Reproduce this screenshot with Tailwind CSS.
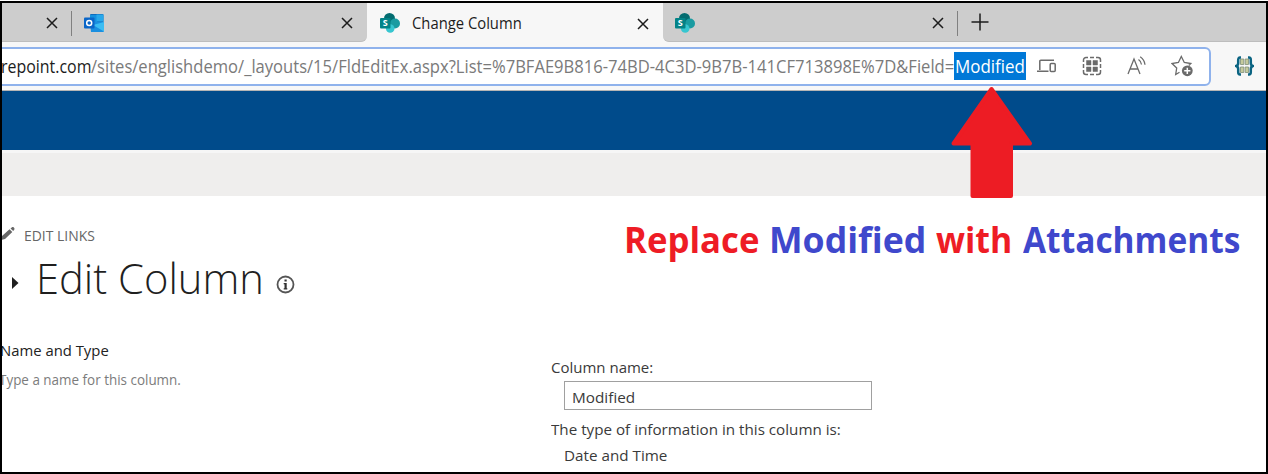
<!DOCTYPE html>
<html lang="en">
<head>
<meta charset="utf-8">
<title>Change Column</title>
<script src="https://cdn.jsdelivr.net/npm/@tailwindcss/browser@4"></script>
</head>
<body class="h-[474px] w-[1268px] overflow-hidden bg-white pt-px font-['Open_Sans','Noto_Sans',sans-serif]">
<svg class="hidden">
  <symbol id="sp" viewBox="0 0 20 20">
    <circle cx="9.5" cy="5.5" r="5.5" fill="#036c70"/>
    <circle cx="15" cy="10.5" r="5" fill="#1a9ba1"/>
    <circle cx="10.2" cy="15.5" r="4.3" fill="#37c6d0"/>
    <rect x="0" y="5" width="10.5" height="10.5" rx="1" fill="#038387"/>
    <text x="5.2" y="13.4" text-anchor="middle" font-size="9" font-weight="700" fill="#fff">S</text>
  </symbol>
  <symbol id="x" viewBox="0 0 12 12"><path d="M1 1l10 10M11 1L1 11" stroke="#1c1c1c" stroke-width="1.5" fill="none"/></symbol>
</svg>
<div class="relative flex h-[473px] w-[1268px] flex-col overflow-hidden border-2 border-black bg-white">
  <div class="flex h-10 shrink-0 bg-[#f7f7f7]">
    <div class="flex h-[39px] w-[365px] items-center rounded-br-md border-b border-[#bdbdbd] bg-[#cdcdcd] pt-0.5 pr-[14px]">
      <svg class="ml-[44px] size-3"><use href="#x"/></svg>
      <div class="ml-[13px] h-[25px] w-px bg-[#808080]"></div>
      <svg class="ml-3 h-[18px] w-5" viewBox="0 0 20 18">
        <rect x="6" y="0" width="13.5" height="14" rx="1" fill="#0f6cbd"/>
        <rect x="6" y="1" width="7" height="7" fill="#1490df"/>
        <rect x="12.500" y="0.500" width="7" height="7" fill="#28a8ea"/>
        <path d="M6 8h14v9a1 1 0 0 1-1 1H7z" fill="#1a8fe0"/>
        <path d="M20 8v9.500L9 11z" fill="#3bbdf3"/>
        <rect x="0" y="3.500" width="10.500" height="11" rx="1" fill="#0a66c8"/>
        <circle cx="5.200" cy="9" r="2.500" fill="none" stroke="#fff" stroke-width="1.500"/>
      </svg>
      <svg class="ml-auto size-3"><use href="#x"/></svg>
    </div>
    <div class="flex h-10 w-[296px] items-center rounded-t-md bg-[#f7f7f7] pr-[14px] pl-[13px]">
      <svg class="-mt-px size-5"><use href="#sp"/></svg>
      <span class="-mt-px ml-3 origin-left scale-x-[.955] text-[15.500px] leading-5 whitespace-nowrap text-[#1c1c1c]">Change Column</span>
      <svg class="mt-0.5 ml-auto size-3"><use href="#x"/></svg>
    </div>
    <div class="flex h-[39px] flex-1 items-center rounded-bl-md border-b border-[#bdbdbd] bg-[#cdcdcd] pt-0.5 pl-3">
      <svg class="size-5"><use href="#sp"/></svg>
      <svg class="ml-[237px] size-3"><use href="#x"/></svg>
      <div class="ml-[13px] h-[25px] w-px bg-[#808080]"></div>
      <svg class="-mt-0.5 ml-[13px] size-[18px]" viewBox="0 0 18 18"><path d="M9 0.500v17M0.500 9h17" stroke="#1c1c1c" stroke-width="1.500"/></svg>
    </div>
  </div>
  <div class="flex h-12 shrink-0 items-start border-b border-[#b5b5b5] bg-[#f7f7f7] pt-[4px]">
    <div class="-ml-2 flex h-[39px] w-[1217px] items-center rounded-md border-2 border-[#8fb2ec] bg-white pb-0.5 pl-[5px] text-[18px] leading-7 whitespace-nowrap">
      <span class="w-[90px]"><span class="inline-block origin-left scale-x-[.885] text-[#1c1c1c]">repoint.com</span></span>
      <span class="w-[863px]"><span class="inline-block origin-left scale-x-[.921] text-[#7a7a7a]">/sites/englishdemo/_layouts/15/FldEditEx.aspx?List=%7BFAE9B816-74BD-4C3D-9B7B-141CF713898E%7D&amp;Field=</span></span>
      <span class="h-7 w-[72px] bg-[#0078d7] pl-px text-white"><span class="inline-block origin-left scale-x-[.94]">Modified</span></span>
      <svg class="ml-[11px] h-[14px] w-5" viewBox="0 0 20 14" fill="none" stroke="#6b6b6b" stroke-width="1.500"><path d="M2.800 11V2.200a1 1 0 0 1 1-1H17M0 12.200h11.500"/><rect x="13.200" y="4.500" width="5" height="8" rx="1"/></svg>
      <svg class="ml-[25px] size-5" viewBox="0 0 20 20" fill="none" stroke="#6b6b6b" stroke-width="1.500"><path d="M1.500 6V4a2.500 2.500 0 0 1 2.500-2.500H6M8 1.500h4M14 1.500h2A2.500 2.500 0 0 1 18.500 4V6M18.500 14v2a2.500 2.500 0 0 1-2.500 2.500H14M12 18.500H8M6 18.500H4A2.500 2.500 0 0 1 1.500 16V14M1.500 8v4M18.500 8v4"/><path d="M4.500 4.500H9V9H4.500zM11 4.500h4.500V9H11zM4.500 11H9v4.500H4.500zM11 11h4.500v4.500H11z" fill="#6b6b6b" stroke="#6b6b6b" stroke-width=".5" stroke-linejoin="round"/></svg>
      <svg class="ml-[25px] h-5 w-5" viewBox="0 0 20 20" fill="none" stroke="#6b6b6b" stroke-width="1.300"><path d="M1 18L7 3l6 15M3.200 13h7.600M11.500 3.500a7 7 0 0 1 3 5M13.200 .8a11 11 0 0 1 4.800 8"/></svg>
      <svg class="ml-[24px] size-[22px]" viewBox="0 0 22 22" fill="none" stroke="#6b6b6b" stroke-width="1.300"><path d="M8.500 17.200L4.700 19.500l1-6.400L1 8.500l6.400-1L10.300 1.500l3 6 6.500 1-2 2"/><circle cx="16.300" cy="15.800" r="5.400" fill="#6b6b6b" stroke="none"/><path d="M16.300 12.700v6.200M13.200 15.800h6.200" stroke="#fff" stroke-width="1.500"/></svg>
    </div>
    <svg class="mt-[9px] ml-6 h-5 w-[19px]" viewBox="0 0 19 20"><path d="M5.500 3h3.300v5.500H5.500zM10.200 3h3.300v5.500h-3.300zM5.500 11h3.300v5.500H5.500zM10.200 11h3.300v5.500h-3.300z" fill="#c5ca9c" stroke="#7f8f78" stroke-width=".8"/><path d="M6 1.500H5Q3.200 1.500 3.200 4v3q0 2.300-2 3Q3.200 10.700 3.200 13v3q0 2.500 1.800 2.500h1M13 1.500h1Q15.800 1.500 15.800 4v3q0 2.300 2 3Q15.800 10.700 15.800 13v3q0 2.500-1.800 2.500h-1" fill="none" stroke="#0b6482" stroke-width="2.500"/></svg>
  </div>
  <div class="h-[59px] shrink-0 bg-[#004b8b]"></div>
  <div class="h-[46px] shrink-0 border-t-[3px] border-[#f6f6f6] bg-[#efeeed]"></div>
  <div class="flex min-h-0 flex-1 flex-col">
    <div class="flex h-[106px] shrink-0 flex-col pt-[30px]">
      <div class="flex h-5 items-center text-[14.500px] leading-5 text-[#666]">
        <svg class="-mt-1 h-[14px] w-[14px]" viewBox="0 0 14 14"><path d="M-1 13l1-4L7.500 2.200l2.800 2.800L3 12zM8.500 1.500L10 0.200q1-.6 1.900.3t.5 2L11.200 4z" fill="#666"/></svg>
        <span class="ml-2 origin-left scale-x-[.96]">EDIT LINKS</span>
      </div>
      <div class="mt-[7px] flex h-[50px] items-center text-[43px] leading-[50px] font-light text-[#1f1f1f]">
        <svg class="mt-[10px] ml-[10px] h-3 w-[7px]" viewBox="0 0 7 12"><path d="M0 0l6.500 6L0 12z" fill="#1f1f1f"/></svg>
        <span class="ml-[17px] w-[240px] whitespace-nowrap"><span class="inline-block origin-left scale-x-[.97]">Edit Column</span></span>
        <svg class="mt-[12px] size-[19px]" viewBox="0 0 19 19"><circle cx="9.500" cy="9.500" r="8" fill="none" stroke="#555" stroke-width="1.800"/><path d="M8.500 4.500h2.200v2H8.500zM7.700 8h3v5.200h.6v1.300H7.700v-1.300h.8V9.300h-.8z" fill="#333"/></svg>
      </div>
    </div>
    <div class="flex flex-1 text-[15px] leading-5 whitespace-nowrap text-[#3a3a3a]">
      <div class="w-[549px] pt-[38px]">
        <div class="-ml-0.5 origin-left scale-x-[.99] text-[#222]"><span>Name and Type</span></div>
        <div class="mt-[10px] -ml-[3px] text-[14px] text-[#7c7c7c]"><span class="inline-block origin-left scale-x-[.96]">Type a name for this column.</span></div>
      </div>
      <div class="pt-[55px]">
        <div><span>Column name:</span></div>
        <div class="mt-1 ml-[13px] h-[29px] w-[308px] border border-[#a0a0a0] pt-[5px] pl-[7px]"><span class="inline-block origin-left scale-x-[1.02]">Modified</span></div>
        <div class="mt-[9px]"><span class="inline-block origin-left scale-x-[1.013]">The type of information in this column is:</span></div>
        <div class="mt-[6px] ml-[13px]"><span class="inline-block origin-left scale-x-[1.015]">Date and Time</span></div>
      </div>
    </div>
  </div>
  <div class="absolute top-[212px] left-[622px] flex h-[50px] text-[36px] leading-[50px] font-bold whitespace-nowrap">
    <span class="w-[145px] text-[#ee1c25]"><span class="inline-block origin-left scale-x-[.965]">Replace</span></span>
    <span class="w-[167px] text-[#3f48cc]"><span class="inline-block origin-left scale-x-[.99]">Modified</span></span>
    <span class="w-[87px] text-[#ee1c25]"><span class="inline-block origin-left scale-x-[.94]">with</span></span>
    <span class="text-[#3f48cc]"><span class="inline-block origin-left scale-x-[.93]">Attachments</span></span>
  </div>
  <svg class="absolute top-[82px] left-[947px] h-[116px] w-[86px]" viewBox="949 85 86 116"><path d="M991.500 89L1030 143.500H1011V196H972.500V143.500H953.500Z" fill="#ed1c24" stroke="#ed1c24" stroke-width="4" stroke-linejoin="round"/></svg>
</div>
</body>
</html>
